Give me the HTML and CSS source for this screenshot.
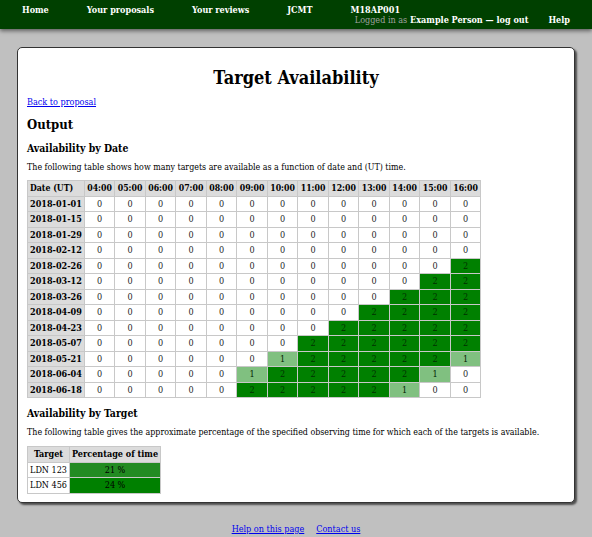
FILE: index.html
```html
<!DOCTYPE html>
<html>
<head>
<meta charset="utf-8">
<title>Target Availability</title>
<link rel="stylesheet" href="styles.css">
</head>
<body>
<header class="topbar">
  <nav class="nav-main">
    <a href="#">Home</a>
    <a href="#">Your proposals</a>
    <a href="#">Your reviews</a>
    <a href="#">JCMT</a>
    <a href="#">M18AP001</a>
  </nav>
  <div class="nav-user">
    <span class="who"><span class="muted">Logged in as</span> <b>Example Person</b> &mdash; <a href="#">log out</a></span>
    <a class="help" href="#">Help</a>
  </div>
</header>

<main class="card">
  <h1>Target Availability</h1>
  <p class="back"><a href="#">Back to proposal</a></p>
  <h2>Output</h2>
  <h3>Availability by Date</h3>
  <p class="intro">The following table shows how many targets are available as a function of date and (UT) time.</p>
  <table class="grid avail">
    <thead>
      <tr><th>Date (UT)</th><th>04:00</th><th>05:00</th><th>06:00</th><th>07:00</th><th>08:00</th><th>09:00</th><th>10:00</th><th>11:00</th><th>12:00</th><th>13:00</th><th>14:00</th><th>15:00</th><th>16:00</th></tr>
    </thead>
    <tbody>
      <tr><th>2018-01-01</th><td>0</td><td>0</td><td>0</td><td>0</td><td>0</td><td>0</td><td>0</td><td>0</td><td>0</td><td>0</td><td>0</td><td>0</td><td>0</td></tr>
      <tr><th>2018-01-15</th><td>0</td><td>0</td><td>0</td><td>0</td><td>0</td><td>0</td><td>0</td><td>0</td><td>0</td><td>0</td><td>0</td><td>0</td><td>0</td></tr>
      <tr><th>2018-01-29</th><td>0</td><td>0</td><td>0</td><td>0</td><td>0</td><td>0</td><td>0</td><td>0</td><td>0</td><td>0</td><td>0</td><td>0</td><td>0</td></tr>
      <tr><th>2018-02-12</th><td>0</td><td>0</td><td>0</td><td>0</td><td>0</td><td>0</td><td>0</td><td>0</td><td>0</td><td>0</td><td>0</td><td>0</td><td>0</td></tr>
      <tr><th>2018-02-26</th><td>0</td><td>0</td><td>0</td><td>0</td><td>0</td><td>0</td><td>0</td><td>0</td><td>0</td><td>0</td><td>0</td><td>0</td><td class="a2">2</td></tr>
      <tr><th>2018-03-12</th><td>0</td><td>0</td><td>0</td><td>0</td><td>0</td><td>0</td><td>0</td><td>0</td><td>0</td><td>0</td><td>0</td><td class="a2">2</td><td class="a2">2</td></tr>
      <tr><th>2018-03-26</th><td>0</td><td>0</td><td>0</td><td>0</td><td>0</td><td>0</td><td>0</td><td>0</td><td>0</td><td>0</td><td class="a2">2</td><td class="a2">2</td><td class="a2">2</td></tr>
      <tr><th>2018-04-09</th><td>0</td><td>0</td><td>0</td><td>0</td><td>0</td><td>0</td><td>0</td><td>0</td><td>0</td><td class="a2">2</td><td class="a2">2</td><td class="a2">2</td><td class="a2">2</td></tr>
      <tr><th>2018-04-23</th><td>0</td><td>0</td><td>0</td><td>0</td><td>0</td><td>0</td><td>0</td><td>0</td><td class="a2">2</td><td class="a2">2</td><td class="a2">2</td><td class="a2">2</td><td class="a2">2</td></tr>
      <tr><th>2018-05-07</th><td>0</td><td>0</td><td>0</td><td>0</td><td>0</td><td>0</td><td>0</td><td class="a2">2</td><td class="a2">2</td><td class="a2">2</td><td class="a2">2</td><td class="a2">2</td><td class="a2">2</td></tr>
      <tr><th>2018-05-21</th><td>0</td><td>0</td><td>0</td><td>0</td><td>0</td><td>0</td><td class="a1">1</td><td class="a2">2</td><td class="a2">2</td><td class="a2">2</td><td class="a2">2</td><td class="a2">2</td><td class="a1">1</td></tr>
      <tr><th>2018-06-04</th><td>0</td><td>0</td><td>0</td><td>0</td><td>0</td><td class="a1">1</td><td class="a2">2</td><td class="a2">2</td><td class="a2">2</td><td class="a2">2</td><td class="a2">2</td><td class="a1">1</td><td>0</td></tr>
      <tr><th>2018-06-18</th><td>0</td><td>0</td><td>0</td><td>0</td><td>0</td><td class="a2">2</td><td class="a2">2</td><td class="a2">2</td><td class="a2">2</td><td class="a2">2</td><td class="a1">1</td><td>0</td><td>0</td></tr>
    </tbody>
  </table>

  <h3>Availability by Target</h3>
  <p>The following table gives the approximate percentage of the specified observing time for which each of the targets is available.</p>
  <table class="grid targets">
    <thead>
      <tr><th>Target</th><th>Percentage of time</th></tr>
    </thead>
    <tbody>
      <tr><td class="name">LDN 123</td><td class="p21">21 %</td></tr>
      <tr><td class="name">LDN 456</td><td class="p24">24 %</td></tr>
    </tbody>
  </table>
</main>

<footer class="footer">
  <a href="#">Help on this page</a>
  <a href="#">Contact us</a>
</footer>
</body>
</html>
```

FILE: styles.css
```css
html, body {
  margin: 0;
  padding: 0;
}
body {
  background: #c0c0c0;
  font-family: "DejaVu Serif Condensed", "DejaVu Serif", serif;
  font-size: 9px;
  color: #000;
  min-height: 537px;
}
.topbar {
  background: #004000;
  height: 29px;
  box-shadow: 0 2px 4px rgba(0,0,0,0.5);
  color: #fff;
  font-weight: bold;
  font-size: 9px;
  line-height: 10px;
  padding-top: 5px;
  box-sizing: border-box;
}
.topbar a {
  color: #fff;
  text-decoration: none;
}
.nav-main {
  display: flex;
  padding-left: 22px;
  gap: 38px;
}
.nav-user {
  display: flex;
  justify-content: flex-end;
  padding-right: 22px;
  gap: 20px;
}
.nav-user .muted {
  color: #a0a0a0;
  font-weight: normal;
}

.card {
  display: block;
  background: #fff;
  margin: 18px 17px 0 17px;
  border: 1px solid #333;
  border-radius: 5px;
  box-shadow: 2px 2px 2px rgba(0,0,0,0.6);
  padding: 8px 9px 8px 9px;
  overflow: hidden;
}
h1 {
  text-align: center;
  font-size: 18px;
  margin: 11px 0 8px 0;
  line-height: 22px;
}
p {
  margin: 0 0 8px 0;
  line-height: 11px;
  font-size: 8.8px;
}
p.intro { margin-bottom: 7px; }
.back { font-size: 9px; margin-bottom: 8px; }
a { color: #0000ee; }
h2 {
  font-size: 13px;
  line-height: 17px;
  margin: 0 0 8px 0;
}
h3 {
  font-size: 10.4px;
  line-height: 14px;
  margin: 0 0 7px 0;
}
table.grid {
  border-collapse: collapse;
  margin-bottom: 8px;
}
.grid th, .grid td {
  border: 1px solid #c8c8c8;
  line-height: 10.5px;
  padding: 2px 2px;
  text-align: center;
  font-size: 9px;
}
.grid th {
  background: #dcdcdc;
  font-weight: bold;
}
.avail thead th { font-size: 8.7px; }
.avail tbody th { text-align: left; }
.avail thead th:first-child { text-align: left; }
.avail td { width: 25.5px; color: #222; }
.avail td.a2 { background: #008000; color: #003000; }
.avail td.a1 { background: #80c080; color: #002000; }
.targets td.name { text-align: left; }
.targets td.p21 { background: #228b22; }
.targets td.p24 { background: #008000; }
table.targets { margin-bottom: 0; }

.footer {
  display: flex;
  justify-content: center;
  gap: 12px;
  margin-top: 21px;
  line-height: 11px;
}
```
